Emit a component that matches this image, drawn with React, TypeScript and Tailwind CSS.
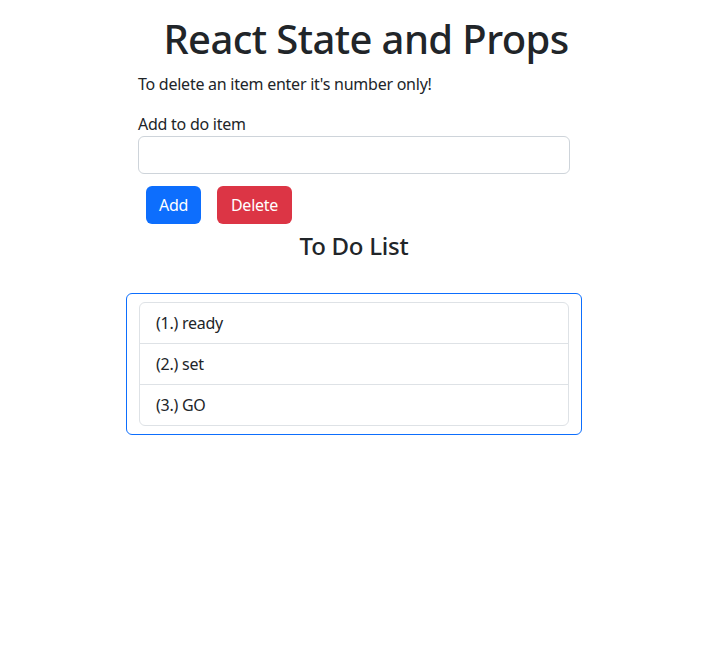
import React from "react";

export default function App() {
  const items = ["ready", "set", "GO"];
  return (
    <div
      className="min-h-[656px] w-full bg-white text-[#212529] tracking-[-0.25px]"
      style={{ fontFamily: '"Noto Sans", "Open Sans", sans-serif' }}
    >
      <div className="flex justify-center pl-1">
        <div className="w-[456px] pt-[15px]">
          <div className="px-3">
            <h1 className="-mx-8 mb-[9px] whitespace-nowrap pl-6 text-center text-[40px] font-medium leading-[48px] tracking-[-0.6px]">
              React State and Props
            </h1>
            <p className="mb-4 text-base leading-6">To delete an item enter it's number only!</p>
            <label className="block text-base leading-6">Add to do item</label>
            <input
              type="text"
              className="block h-[38px] w-full rounded-md border border-[#ced4da] bg-white px-3 text-base outline-none"
            />
            <div className="mt-3 flex">
              <button className="mx-2 h-[38px] w-[55px] rounded-md bg-[#0d6efd] text-base text-white">
                Add
              </button>
              <button className="mx-2 h-[38px] w-[75px] rounded-md bg-[#dc3545] text-base text-white">
                Delete
              </button>
            </div>
            <h4 className="mt-[7px] text-center text-2xl font-medium leading-[29px]">To Do List</h4>
          </div>
          <div className="mt-[33px] rounded-md border border-[#0d6efd] px-3 py-2">
            <ul className="overflow-hidden rounded-md border border-[#dee2e6]">
              {items.map((it, i) => (
                <li
                  key={i}
                  className={`px-4 py-2 text-base leading-6 ${i > 0 ? "border-t border-[#dee2e6]" : ""}`}
                >
                  ({i + 1}.) {it}
                </li>
              ))}
            </ul>
          </div>
        </div>
      </div>
    </div>
  );
}
